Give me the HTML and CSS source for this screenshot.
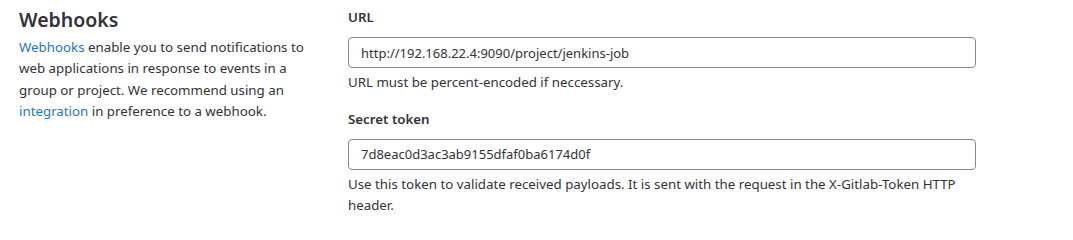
FILE: index.html
```html
<!DOCTYPE html>
<html lang="en">
<head>
<meta charset="utf-8">
<title>Webhooks</title>
<link rel="stylesheet" href="styles.css">
</head>
<body>
<div class="page">
  <section class="intro">
    <h4 class="title">Webhooks</h4>
    <p class="desc"><a href="#" class="link">Webhooks</a> enable you to send notifications to web applications in response to events in a group or project. We recommend using an <a href="#" class="link">integration</a> in preference to a webhook.</p>
  </section>
  <form class="form">
    <div class="group">
      <label class="label" for="url">URL</label>
      <input class="input" id="url" type="text" value="http://192.168.22.4:9090/project/jenkins-job">
      <p class="help">URL must be percent-encoded if neccessary.</p>
    </div>
    <div class="group">
      <label class="label" for="token">Secret token</label>
      <input class="input" id="token" type="text" value="7d8eac0d3ac3ab9155dfaf0ba6174d0f">
      <p class="help">Use this token to validate received payloads. It is sent with the request in the X-Gitlab-Token HTTP header.</p>
    </div>
  </form>
</div>
</body>
</html>
```

FILE: styles.css
```css
html, body {
  margin: 0;
  padding: 0;
  background: #ffffff;
}
body {
  font-family: "Noto Sans", "Open Sans", sans-serif;
  font-size: 13.3px;
  color: #333238;
}
.page {
  display: flex;
  padding: 0 0 0 19px;
}
.intro {
  width: 294px;
  flex: none;
  margin-right: 35px;
}
.title {
  margin: 8px 0 0;
  font-size: 19.5px;
  line-height: 24px;
  font-weight: 600;
  color: #333238;
}
.desc {
  margin: 5px 0 0;
  line-height: 21.3px;
}
.link {
  color: #1f75cb;
  text-decoration: none;
}
.form {
  display: flex;
  flex-direction: column;
  width: 628px;
  padding-top: 7px;
}
.group {
  display: flex;
  flex-direction: column;
  margin-bottom: 15px;
}
.label {
  font-weight: 600;
  line-height: 20px;
  margin-bottom: 10px;
}
.input {
  box-sizing: border-box;
  width: 100%;
  height: 31px;
  padding: 0 12px;
  border: 1px solid #89888d;
  border-radius: 4px;
  font-family: inherit;
  font-size: 13px;
  color: #333238;
  background: #fff;
  outline: none;
}
.help {
  margin: 4px 0 0;
  line-height: 21.5px;
}
```
